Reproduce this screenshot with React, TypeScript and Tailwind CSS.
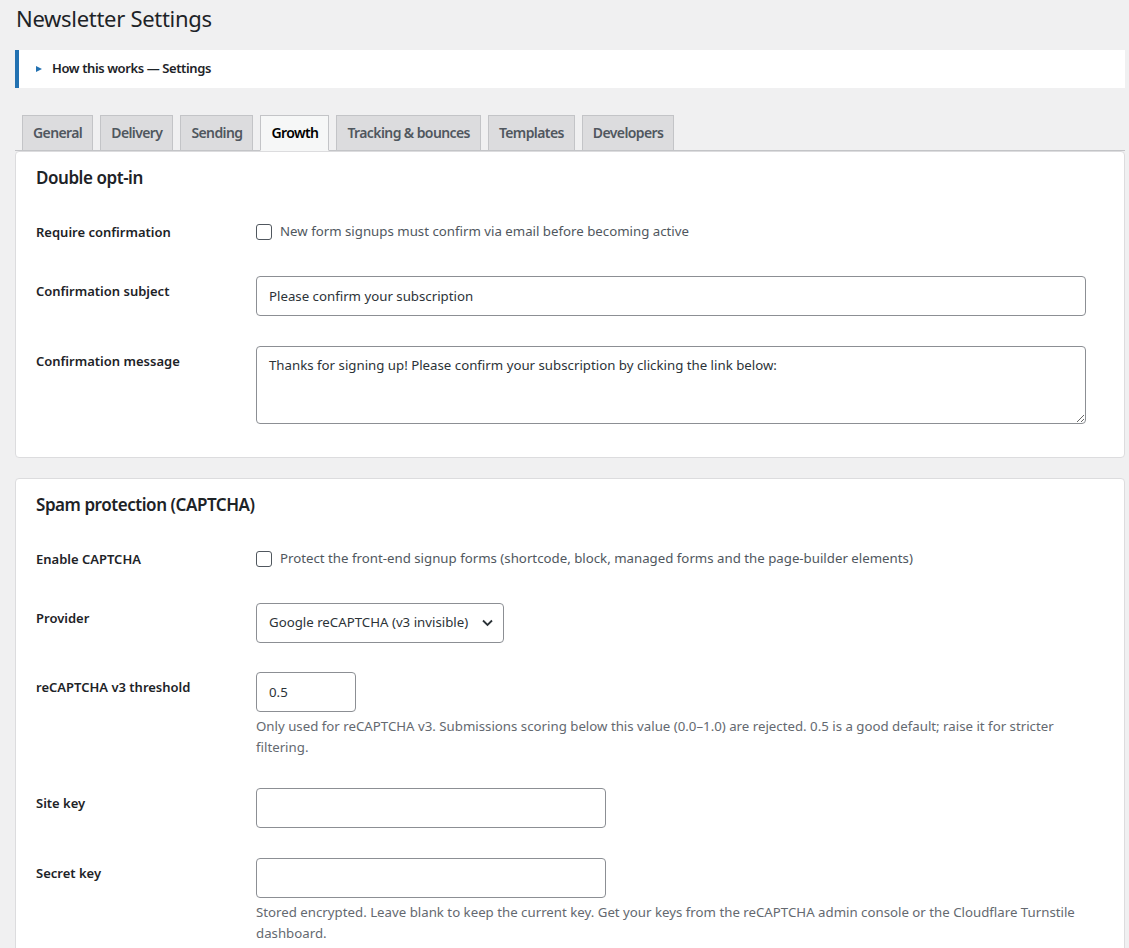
import React from "react";

const FONT = { fontFamily: '"Noto Sans", "Open Sans", sans-serif' };

function Tab({ label, active }: { label: string; active?: boolean }) {
  return (
    <div
      className={
        "ml-[7px] px-[10px] py-[5px] text-[14px] leading-[24px] font-semibold tracking-[-0.6px] border border-[#c3c4c7] " +
        (active
          ? "bg-[#f6f7f7] text-[#000] border-b-[#f6f7f7] mb-[-1px]"
          : "bg-[#dcdcde] text-[#50575e] border-b-0")
      }
    >
      {label}
    </div>
  );
}

function Row({
  label,
  children,
  compact,
  tdPb,
}: {
  label: string;
  children: React.ReactNode;
  compact?: boolean;
  tdPb?: string;
}) {
  return (
    <div className="flex">
      <div
        className={
          "w-[220px] shrink-0 text-[13px] leading-[20px] font-semibold text-[#1d2327] " +
          (compact ? "pt-[21px] pb-[19px]" : "pt-[20px] pb-[20px]")
        }
      >
        {label}
      </div>
      <div
        className={
          "flex-1 min-w-0 pr-[10px] " +
          (compact ? "pt-[16px] pb-[14px]" : "pt-[15px] " + (tdPb ?? "pb-[15px]"))
        }
      >
        {children}
      </div>
    </div>
  );
}

function Check({ text }: { text: string }) {
  return (
    <label className="flex items-center h-[30px] gap-[8px] text-[13.25px] text-[#50575e]">
      <span className="block w-[16px] h-[16px] border border-[#50575e] rounded-[3px] bg-white shrink-0" />
      <span>{text}</span>
    </label>
  );
}

function TextInput({ value, w }: { value?: string; w: string }) {
  return (
    <input
      readOnly
      value={value ?? ""}
      className={
        w +
        " block h-[40px] border border-[#8c8f94] rounded-[4px] bg-white px-[12px] text-[13.25px] text-[#2c3338] outline-none"
      }
      style={FONT}
    />
  );
}

function Desc({ children }: { children: React.ReactNode }) {
  return <p className="mt-[4px] text-[13.25px] leading-[21px] text-[#646970]">{children}</p>;
}

function Card({ title, children, className }: { title: string; children: React.ReactNode; className?: string }) {
  return (
    <div
      className={
        "bg-white border border-[#dcdcde] rounded-[4px] px-[20px] pt-[14px] pb-[18px] " + (className ?? "")
      }
    >
      <h2 className="text-[17px] leading-[24px] font-semibold tracking-[-0.45px] text-[#1d2327] mb-[11px]">
        {title}
      </h2>
      {children}
    </div>
  );
}

export default function App() {
  return (
    <div className="min-h-screen bg-[#f0f0f1] pl-[15px] pr-[4px] text-[#1d2327]" style={FONT}>
      <h1 className="pt-[4px] pl-[1px] text-[22px] leading-[29px] font-normal tracking-[-0.3px] text-[#1d2327]">
        Newsletter Settings
      </h1>

      <div className="mt-[17px] h-[38px] bg-white border-l-4 border-[#2271b1] flex items-center pl-[17px]">
        <svg width="6" height="6" viewBox="0 0 6 6" className="mr-[10px]">
          <path d="M0 0 L6 3 L0 6 Z" fill="#2271b1" />
        </svg>
        <span className="text-[13px] font-semibold tracking-[-0.4px] text-[#1d2327]">
          How this works — Settings
        </span>
      </div>

      <div className="mt-[27px] flex border-b border-[#c3c4c7]">
        <Tab label="General" />
        <Tab label="Delivery" />
        <Tab label="Sending" />
        <Tab label="Growth" active />
        <Tab label="Tracking & bounces" />
        <Tab label="Templates" />
        <Tab label="Developers" />
      </div>

      <Card title="Double opt-in">
        <Row label="Require confirmation" compact>
          <Check text="New form signups must confirm via email before becoming active" />
        </Row>
        <Row label="Confirmation subject">
          <TextInput value="Please confirm your subscription" w="w-[99%]" />
        </Row>
        <Row label="Confirmation message">
          <textarea
            readOnly
            value="Thanks for signing up! Please confirm your subscription by clicking the link below:"
            className="block w-[99%] h-[78px] border border-[#8c8f94] rounded-[4px] bg-white px-[12px] py-[8px] text-[13.25px] leading-[20px] text-[#2c3338] outline-none resize-y"
            style={FONT}
          />
        </Row>
      </Card>

      <Card title="Spam protection (CAPTCHA)" className="mt-[20px]">
        <Row label="Enable CAPTCHA" compact>
          <Check text="Protect the front-end signup forms (shortcode, block, managed forms and the page-builder elements)" />
        </Row>
        <Row label="Provider" tdPb="pb-[14px]">
          <div className="relative w-[248px]">
            <select
              className="block w-full h-[40px] appearance-none border border-[#8c8f94] rounded-[4px] bg-white pl-[12px] pr-[30px] text-[13.25px] text-[#2c3338] outline-none"
              style={FONT}
              defaultValue="v3"
            >
              <option value="v3">Google reCAPTCHA (v3 invisible)</option>
            </select>
            <svg
              className="pointer-events-none absolute right-[11px] top-[16px]"
              width="11"
              height="8"
              viewBox="0 0 11 8"
            >
              <path d="M1 1.5 L5.5 6 L10 1.5" fill="none" stroke="#2c3338" strokeWidth="1.8" />
            </svg>
          </div>
        </Row>
        <Row label="reCAPTCHA v3 threshold">
          <TextInput value="0.5" w="w-[100px]" />
          <Desc>
            Only used for reCAPTCHA v3. Submissions scoring below this value (0.0–1.0) are rejected. 0.5 is a good
            default; raise it for stricter filtering.
          </Desc>
        </Row>
        <Row label="Site key">
          <TextInput w="w-[350px]" />
        </Row>
        <Row label="Secret key">
          <TextInput w="w-[350px]" />
          <Desc>
            Stored encrypted. Leave blank to keep the current key. Get your keys from the reCAPTCHA admin console or
            the Cloudflare Turnstile dashboard.
          </Desc>
        </Row>
      </Card>
    </div>
  );
}
